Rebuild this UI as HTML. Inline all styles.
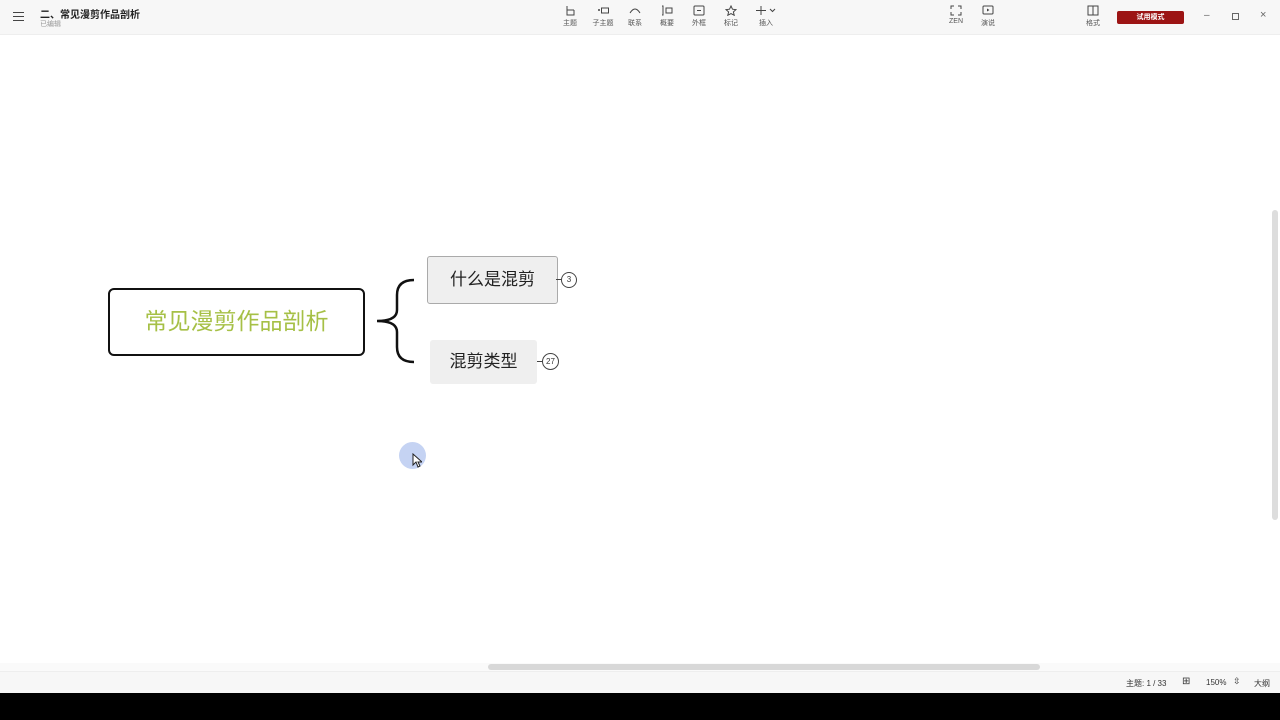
<!DOCTYPE html>
<html><head><meta charset="utf-8"><style>
*{margin:0;padding:0;box-sizing:border-box}
body{width:1280px;height:720px;position:relative;overflow:hidden;background:#fff;font-family:"Liberation Sans","Noto Sans CJK SC",sans-serif;color:#333}
.top{position:absolute;left:0;top:0;width:1280px;height:35px;background:#f7f7f7;border-bottom:1px solid #eee}
.tb{position:absolute;top:5px;font-size:7px;color:#555;text-align:center;width:30px}
.tb svg{display:block;margin:0 auto 2px}
.abs{position:absolute}
</style></head><body>
<div class="top">
<div class="abs" style="left:13px;top:12px;width:11px;height:9px;border-top:1.5px solid #444;border-bottom:1.5px solid #444"><div style="margin-top:2.5px;border-top:1.5px solid #444"></div></div>
<div class="abs" style="left:40px;top:6px;font-size:10px;color:#222;font-weight:bold">二、常见漫剪作品剖析</div>
<div class="abs" style="left:40px;top:19px;font-size:7px;color:#999">已编辑</div>
<div class="tb" style="left:555px"><svg width="12" height="11"><path d="M3 1v4h7M3 5v5h7V5" fill="none" stroke="#444"/></svg>主题</div>
<div class="tb" style="left:588px"><svg width="12" height="11"><circle cx="2" cy="5" r="1" fill="#444"/><rect x="4.5" y="3" width="7" height="5" fill="none" stroke="#444"/></svg>子主题</div>
<div class="tb" style="left:620px"><svg width="12" height="11"><path d="M1 8Q6 0 11 8" fill="none" stroke="#444"/></svg>联系</div>
<div class="tb" style="left:652px"><svg width="12" height="11"><path d="M1 1h1v9H1M5 3h6v5H5z" fill="none" stroke="#444"/></svg>概要</div>
<div class="tb" style="left:684px"><svg width="12" height="11"><rect x="1" y="1" width="10" height="9" rx="1" fill="none" stroke="#444"/><path d="M4 5.5h4" stroke="#444"/></svg>外框</div>
<div class="tb" style="left:716px"><svg width="12" height="11"><path d="M6 1l1.5 3.2 3.5.4-2.6 2.3.8 3.4L6 8.6 2.8 10.3l.8-3.4L1 4.6l3.5-.4z" fill="none" stroke="#444"/></svg>标记</div>
<div class="tb" style="left:751px"><svg width="22" height="11"><path d="M6 1v9M1 5.5h10M15 4l2.5 2.5L20 4" fill="none" stroke="#444"/></svg>插入</div>
<div class="tb" style="left:941px"><svg width="12" height="11"><path d="M1 4V1h3M8 1h3v3M11 7v3H8M4 10H1V7" fill="none" stroke="#444"/></svg>ZEN</div>
<div class="tb" style="left:973px"><svg width="12" height="11"><rect x="1" y="1" width="10" height="8" rx="1" fill="none" stroke="#444"/><path d="M5 3.5v3l2.5-1.5z" fill="#444"/></svg>演说</div>
<div class="tb" style="left:1078px"><svg width="12" height="11"><rect x="1" y="1" width="10" height="9" fill="none" stroke="#444"/><path d="M6 1v9" stroke="#444"/></svg>格式</div>
<div class="abs" style="left:1117px;top:11px;width:67px;height:13px;background:#9c1414;border-radius:2px;color:#fff;font-size:7px;text-align:center;line-height:13px;font-weight:bold">试用模式</div>
<div class="abs" style="left:1204px;top:10px;font-size:10px;color:#666">–</div>
<div class="abs" style="left:1232px;top:13px;width:7px;height:7px;border:1px solid #666"></div>
<div class="abs" style="left:1260px;top:9px;font-size:11px;color:#666">×</div>
</div>
<!-- mind map -->
<div class="abs" style="left:108px;top:288px;width:257px;height:68px;border:2.5px solid #111;border-radius:6px;color:#a6c046;font-size:23px;text-align:center;line-height:62px">常见漫剪作品剖析</div>
<svg class="abs" style="left:370px;top:275px" width="50" height="92"><path d="M44 5Q27 5 27 20V35Q27 46 7 46Q27 46 27 57V72Q27 87 44 87" fill="none" stroke="#111" stroke-width="2.5"/></svg>
<div class="abs" style="left:427px;top:256px;width:131px;height:48px;border:1.5px solid #aaa;border-radius:3px;background:#efefef;font-size:17px;text-align:center;line-height:45px;color:#222">什么是混剪</div>
<div class="abs" style="left:556px;top:279px;width:6px;border-top:1px solid #444"></div>
<div class="abs" style="left:561px;top:272px;width:16px;height:16px;border:1px solid #444;border-radius:50%;font-size:8px;text-align:center;line-height:14px">3</div>
<div class="abs" style="left:430px;top:340px;width:107px;height:44px;border-radius:3px;background:#efefef;font-size:17px;text-align:center;line-height:44px;color:#222">混剪类型</div>
<div class="abs" style="left:537px;top:361px;width:6px;border-top:1px solid #444"></div>
<div class="abs" style="left:542px;top:353px;width:17px;height:17px;border:1px solid #444;border-radius:50%;font-size:8px;text-align:center;line-height:15px">27</div>
<div class="abs" style="left:399px;top:442px;width:27px;height:27px;border-radius:50%;background:#c5d3f3"></div>
<svg class="abs" style="left:412px;top:453px" width="10" height="15"><path d="M1 1v11l3-3 2 5 2-1-2-4h4z" fill="#fff" stroke="#222"/></svg>
<!-- scrollbars -->
<div class="abs" style="left:1272px;top:210px;width:6px;height:310px;background:#ddd;border-radius:3px"></div>
<div class="abs" style="left:0;top:663px;width:1280px;height:8px;background:#fafafa"></div>
<div class="abs" style="left:488px;top:664px;width:552px;height:6px;background:#d8d8d8;border-radius:3px"></div>
<div class="abs" style="left:0;top:671px;width:1280px;height:22px;background:#f7f7f7;border-top:1px solid #eee;font-size:8px;color:#333">
<span class="abs" style="left:1126px;top:6px">主题: 1 / 33</span>
<span class="abs" style="left:1182px;top:4px;font-size:10px">⊞</span>
<span class="abs" style="left:1206px;top:6px">150%</span>
<span class="abs" style="left:1233px;top:4px;font-size:9px">⇳</span>
<span class="abs" style="left:1254px;top:6px">大纲</span>
</div>
<div class="abs" style="left:0;top:693px;width:1280px;height:27px;background:#000"></div>
</body></html>
